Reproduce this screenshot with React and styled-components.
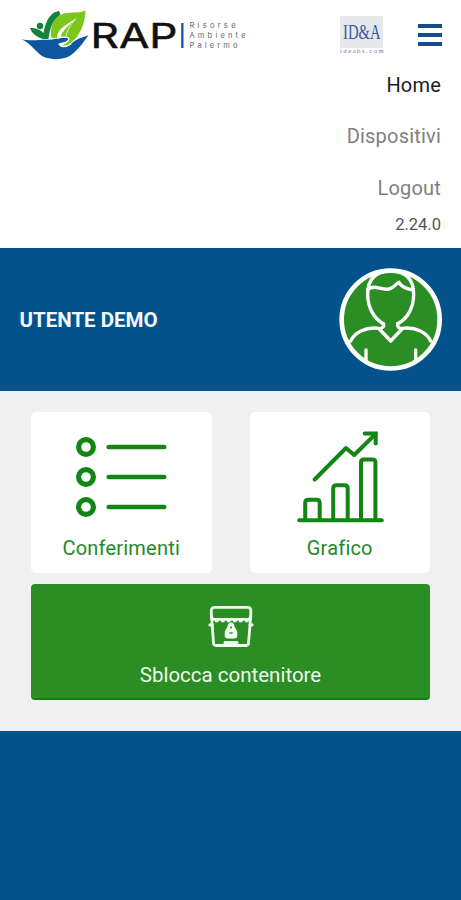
import React from "react";
import styled, { createGlobalStyle } from "styled-components";

const App = () => {
    return (
        <Page>
            <GlobalStyle />
            <Header>
                <Top>
                    <RapLogo />
                    <Right>
                        <IdeaLogo />
                        <Burger>
                            <Line />
                            <Line />
                            <Line />
                        </Burger>
                    </Right>
                </Top>
                <Nav>
                    <Link $active>Home</Link>
                    <Link>Dispositivi</Link>
                    <Link>Logout</Link>
                </Nav>
                <Version>2.24.0</Version>
            </Header>
            <Profile>
                <User>UTENTE DEMO</User>
                <Avatar />
            </Profile>
            <Main>
                <Cards>
                    <Card>
                        <ListIcon />
                        <Label>Conferimenti</Label>
                    </Card>
                    <Card>
                        <ChartIcon />
                        <Label>Grafico</Label>
                    </Card>
                </Cards>
                <Unlock>
                    <BinIcon />
                    <UnlockText>Sblocca contenitore</UnlockText>
                </Unlock>
            </Main>
        </Page>
    )
}

export default App;

const RapLogo = () => (
    <svg width="230" height="70" viewBox="20 0 230 70">
        <path d="M54 12.500 L59 11 L60.500 14.500 C53 20 50 27 48.500 39 H43 C37 37 32 34 30 28 C36 28 41 30 43.500 33 C45 24 48 17 54 12.500Z" fill="#15843a" />
        <circle cx="40" cy="26" r="3.200" fill="#15843a" />
        <path d="M51.500 38 C49 23 57 14 67 13 C74 12 80 13 85.500 10.500 C85 24 80 37 68 45 L62 46 C66 43 70 41 69 38 C63 35 58 38 51.500 38Z" fill="#7bc51c" />
        <path d="M57 37 C57.500 29 66 25 76 18.500 C69 25 62 31 60.500 37Z" fill="#fff" />
        <path d="M76 18.500 C70 25 67 31 66 36" fill="none" stroke="#fff" strokeWidth="0.800" />
        <path d="M21.500 39.300 C29 41 37 40 47 39.800 C55 40 61 36 68 38 C70 40 67 43 60 43.500 C59 47 66 48 71 44 C76 39 83 37 88.500 35.300 C84 41 80 48 73 53.500 C66 60 52 61 42 56 C34 50 30 43 21.500 39.300Z" fill="#0e56a0" />
        <path d="M60 43.500 C68 42.500 71 39 67.500 37.500 C64 36.500 60 37.500 57 38.500" fill="none" stroke="#fff" strokeWidth="1.200" />
        <path d="M59 43.500 C60 47.500 66 47.500 71 44" fill="none" stroke="#fff" strokeWidth="1.300" />
        <LogoName x="90.500" y="47.500" textLength="87">RAP</LogoName>
        <rect x="181.200" y="23" width="2.300" height="25" fill="#1557a0" />
        <LogoText x="189.500" y="28" textLength="46">Risorse</LogoText>
        <LogoText x="189.500" y="38" textLength="56">Ambiente</LogoText>
        <LogoText x="189.500" y="47.500" textLength="48">Palermo</LogoText>
    </svg>
)

const IdeaLogo = () => (
    <IdeaSvg width="46" height="40" viewBox="339 15 46 40">
        <rect x="340" y="16" width="43" height="32" fill="#e7e8ec" />
        <IdeaName x="343" y="39" textLength="37.500">ID&amp;A</IdeaName>
        <IdeaUrl x="340" y="53" textLength="43.500">ideabs.com</IdeaUrl>
    </IdeaSvg>
)

const Avatar = () => (
    <svg width="104" height="104" viewBox="26 22 312 312">
        <circle cx="181" cy="176.500" r="147" fill="#2a8e24" stroke="#fff" strokeWidth="14" />
        <g fill="none" stroke="#fff" strokeWidth="10" strokeLinecap="round" strokeLinejoin="round" transform="translate(-1 -1)">
            <path d="M160 190 C130 174 113 139 113 102 C113 55 136 33 182 33 C228 33 251 55 251 102 C251 139 235 174 203 190" />
            <path d="M113 87 C137 71 151 91 177 86 C193 83 195 71 207 66 C214 82 233 85 250 90" />
            <path d="M160 190 C164 199 156 204 148 206 L182 242 L216 206 C208 204 200 199 203 190" />
            <path d="M148 204 C105 198 73 218 62 242" />
            <path d="M216 204 C259 198 291 218 302 242" />
            <path d="M108 269 V300 M257 269 V300" />
        </g>
    </svg>
)

const ListIcon = () => (
    <svg width="92" height="84" viewBox="75.300 435 92 84">
        <g fill="none" stroke="#138513" strokeLinecap="round">
            {[447, 477, 507].map((y) => (
                <React.Fragment key={y}>
                    <circle cx="86.300" cy={y} r="7.400" strokeWidth="5.200" />
                    <path d={`M109 ${y} H164.500`} strokeWidth="4.600" />
                </React.Fragment>
            ))}
        </g>
    </svg>
)

const ChartIcon = () => (
    <svg width="88" height="92" viewBox="296.300 431 88 92">
        <g fill="none" stroke="#138513" strokeWidth="4" strokeLinecap="round" strokeLinejoin="round">
            <path d="M299.500 520.300 H382" />
            <path d="M305.500 520 V503 Q305.500 499.800 308.700 499.800 H316.800 Q320 499.800 320 503 V520" />
            <path d="M333.500 520 V488.500 Q333.500 485.300 336.700 485.300 H344.800 Q348 485.300 348 488.500 V520" />
            <path d="M361.300 520 V462.500 Q361.300 459.500 364.300 459.500 H372.700 Q375.700 459.500 375.700 462.500 V520" />
            <path d="M315 479.500 L346.300 448 L354.500 455 L376 433.800" />
            <path d="M365 433.500 H376 V443.500" strokeLinejoin="miter" />
        </g>
    </svg>
)

const BinIcon = () => (
    <svg width="46" height="44" viewBox="208 604 46 44">
        <g fill="none" stroke="#f3fff0" strokeWidth="2.800" strokeLinecap="round" strokeLinejoin="round">
            <rect x="211.300" y="607.300" width="39.500" height="12" rx="3" />
            <path d="M209.800 625 H212.200 L213.500 643 Q213.700 645.500 216 645.500 H246 Q248.300 645.500 248.500 643 L250 625 H252.200" />
            <path d="M211.500 616 L212.200 625 M250.700 616 L250 625" />
            <path d="M225 645 V642.500 H237 V645" />
        </g>
        <path d="M215 621 H249" stroke="#f3fff0" strokeWidth="2.500" strokeDasharray="3.500 2.500" />
        <path d="M227.500 626.500 Q228 622.500 231 622.500 Q234 622.500 234.500 626.500 L237.300 631.500 V635.500 Q237.300 638.500 234.300 638.500 H227.700 Q224.700 638.500 224.700 635.500 V631.500Z" fill="#f3fff0" />
        <circle cx="231" cy="627.500" r="1.100" fill="#2a8e24" />
        <path d="M229.300 633 H232.700" stroke="#2a8e24" strokeWidth="1.400" />
    </svg>
)

const GlobalStyle = createGlobalStyle`
body{
    margin: 0;
    background-color: #03528c;
    font-family: Roboto, "Liberation Sans", sans-serif;
}
`;

const Page = styled.div`
min-height: 900px;
background-color: #03528c;
`;

const Header = styled.header`
box-sizing: border-box;
height: 248px;
background-color: #fff;
`;

const Top = styled.div`
height: 70px;
padding: 0 19px 0 20px;
display: flex;
justify-content: space-between;
align-items: center;
`;

const Right = styled.div`
display: flex;
align-items: center;
gap: 33px;
`;

const Burger = styled.div`
width: 24px;
display: flex;
flex-direction: column;
gap: 5px;
`;

const Line = styled.div`
height: 4px;
background-color: #164c8c;
`;

const Nav = styled.nav`
padding-right: 20px;
display: flex;
flex-direction: column;
align-items: flex-end;
gap: 21.300px;
`;

const Link = styled.div`
font-size: 20px;
line-height: 30px;
letter-spacing: 0.2px;
color: ${({ $active }) => ($active ? "#1c1c1c" : "#7f7f7f")};
`;

const Version = styled.div`
padding-right: 20px;
text-align: right;
font-size: 16.500px;
line-height: 43px;
color: #555;
`;

const Profile = styled.section`
box-sizing: border-box;
height: 143px;
padding: 0 18px 0 19.500px;
display: flex;
justify-content: space-between;
align-items: center;
background-color: #03528c;
`;

const User = styled.div`
font-size: 20.500px;
font-weight: 700;
color: #f4f9ff;
`;

const Main = styled.main`
box-sizing: border-box;
height: 340px;
padding: 21px 31px 0;
background-color: #f0f0f0;
`;

const Cards = styled.div`
display: flex;
justify-content: space-between;
`;

const Card = styled.div`
box-sizing: border-box;
width: 180.500px;
height: 161px;
padding-top: 19px;
border-radius: 5px;
background-color: #fff;
display: flex;
flex-direction: column;
align-items: center;

svg{
    height: 92px;
}
`;

const Label = styled.div`
margin-top: 10px;
font-size: 20px;
line-height: 30px;
letter-spacing: 0.2px;
color: #25882a;
`;

const Unlock = styled.div`
box-sizing: border-box;
height: 116px;
margin-top: 11px;
padding-top: 20px;
border-radius: 4px;
border-bottom: 2px solid #118011;
background-color: #2a8e24;
display: flex;
flex-direction: column;
align-items: center;
`;

const UnlockText = styled.div`
margin-top: 12px;
font-size: 20.500px;
line-height: 30px;
color: #eefbea;
`;

const LogoName = styled.text.attrs({ lengthAdjust: "spacingAndGlyphs" })`
font-family: Inter, sans-serif;
font-size: 33.500px;
font-weight: 400;
fill: #111;
stroke: #111;
stroke-width: 0.5px;
`;

const LogoText = styled.text.attrs({ lengthAdjust: "spacing" })`
font-family: Inter, sans-serif;
font-size: 7.500px;
fill: #666;
`;

const IdeaSvg = styled.svg`
overflow: visible;
`;

const IdeaName = styled.text.attrs({ lengthAdjust: "spacingAndGlyphs" })`
font-family: "Liberation Serif", serif;
font-size: 20px;
fill: #3157a8;
`;

const IdeaUrl = styled.text.attrs({ lengthAdjust: "spacing" })`
font-family: "Liberation Serif", serif;
font-size: 6.500px;
fill: #5c75b4;
`;
